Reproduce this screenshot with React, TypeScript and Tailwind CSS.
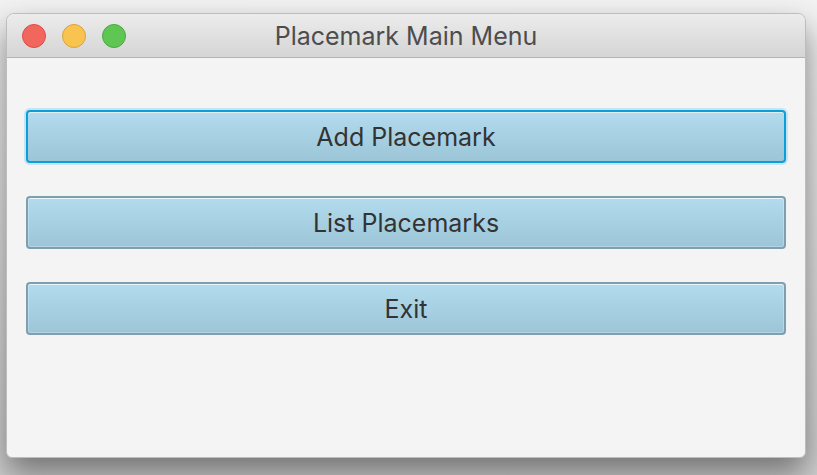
import React from 'react';

const font = { fontFamily: 'Inter, "Noto Sans", sans-serif' };

// --- Przycisk menu ---
function MenuButton({ label, focused }: { label: string; focused?: boolean }) {
    return (
        <button
            className={
                focused
                    ? 'h-[53px] w-full rounded-[4px] border-2 border-[#0a9fd9] bg-gradient-to-b from-[#b2dcee] to-[#9cc5d8] pt-[2px] text-[25px] text-[#333333] shadow-[0_0_0_2px_rgba(160,215,240,0.55),inset_0_1px_0_rgba(255,255,255,0.55)]'
                    : 'h-[53px] w-full rounded-[4px] border-2 border-[#7f9fb1] bg-gradient-to-b from-[#b2dcee] to-[#9cc5d8] pt-[2px] text-[25px] text-[#333333] shadow-[inset_0_1px_0_rgba(255,255,255,0.6),inset_0_0_0_1px_rgba(255,255,255,0.25)]'
            }
        >
            {label}
        </button>
    );
}

export default function App() {
    return (
        <div className="h-[475px] w-[817px] overflow-hidden bg-gradient-to-b from-[#f2f2f2] to-[#d0d0d0] pl-[6px] pt-[13px]" style={font}>
            <div className="flex h-[445px] w-[800px] flex-col overflow-hidden rounded-t-[8px] rounded-b-[6px] border border-[#bdbdbd] bg-[#f4f4f4] shadow-[0_16px_32px_rgba(0,0,0,0.45)]">
                {/* Pasek tytułu */}
                <div className="relative flex h-[44px] shrink-0 items-center justify-center border-b border-[#b3b3b3] bg-gradient-to-b from-[#ececec] to-[#d5d5d5] pt-[2px]">
                    <div className="absolute left-[15px] top-[10px] flex gap-[16px]">
                        <span className="h-[24px] w-[24px] rounded-full border border-[#de4c43] bg-[#f1675d]" />
                        <span className="h-[24px] w-[24px] rounded-full border border-[#dca23a] bg-[#f9c34f]" />
                        <span className="h-[24px] w-[24px] rounded-full border border-[#4aa93e] bg-[#5fc653]" />
                    </div>
                    <span className="text-[25px] text-[#4d4d4d]">Placemark Main Menu</span>
                </div>

                {/* Przyciski */}
                <div className="flex flex-col gap-[33px] px-[19px] pt-[52px]">
                    <MenuButton label="Add Placemark" focused />
                    <MenuButton label="List Placemarks" />
                    <MenuButton label="Exit" />
                </div>
            </div>
        </div>
    );
}
